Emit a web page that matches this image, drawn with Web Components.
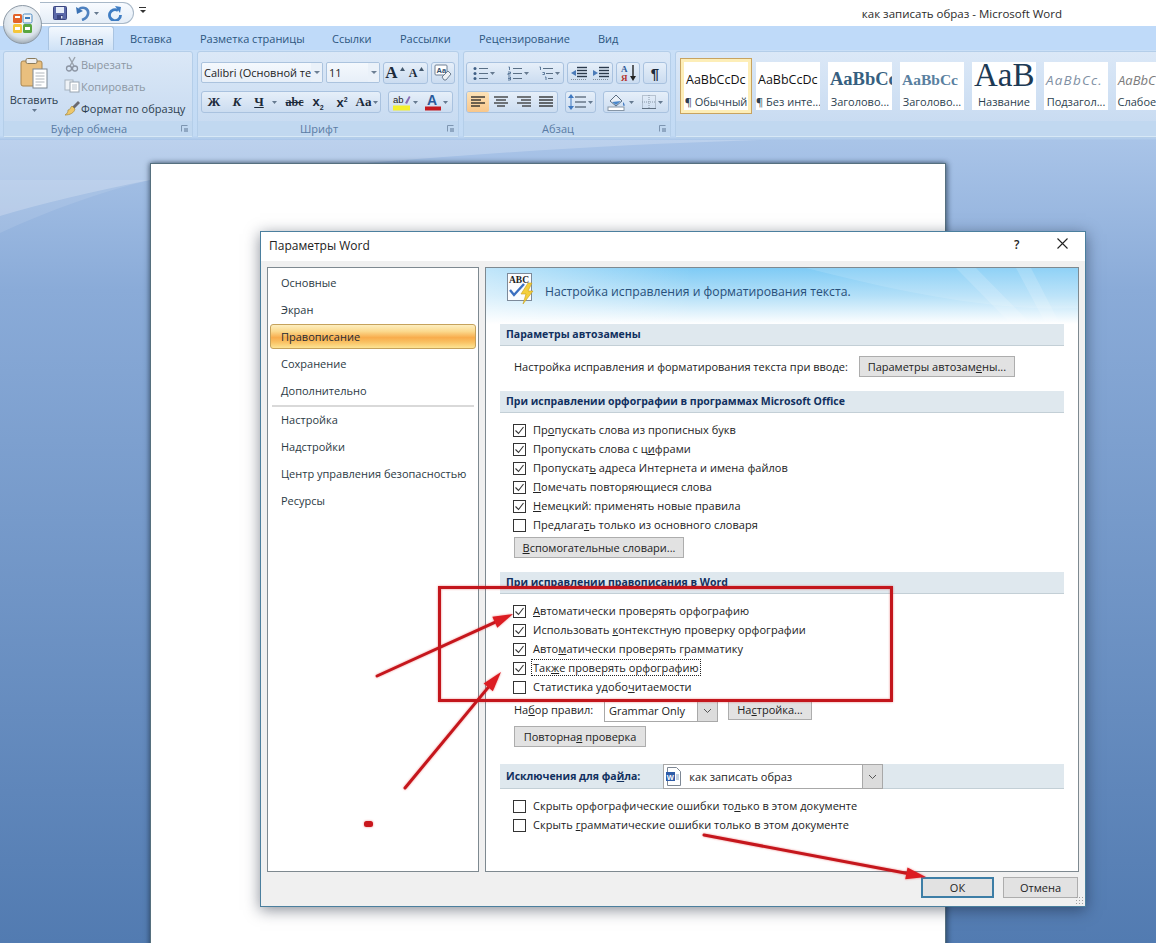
<!DOCTYPE html>
<html lang="ru"><head><meta charset="utf-8"><title>Параметры Word</title>
<style>
html,body{margin:0;padding:0;background:#fff}
body{font-family:"Open Sans","Noto Sans",sans-serif;font-size:11px;color:#222}
u{text-underline-offset:1px}
</style></head><body>
<wd-app>
  <wd-titlebar>как записать образ - Microsoft Word</wd-titlebar>
  <wd-tabs>
    <wd-tab active style="width:66px;margin-right:4px">Главная</wd-tab>
    <wd-tab style="width:70px">Вставка</wd-tab>
    <wd-tab style="width:132px">Разметка страницы</wd-tab>
    <wd-tab style="width:68px">Ссылки</wd-tab>
    <wd-tab style="width:79px">Рассылки</wd-tab>
    <wd-tab style="width:119px">Рецензирование</wd-tab>
    <wd-tab style="width:50px">Вид</wd-tab>
  </wd-tabs>
  <wd-ribbon>
    <wd-group style="width:190px" launcher>
      <wd-clipboard>
        <wd-paste slot="paste"><wd-icon name="paste"></wd-icon><span>Вставить</span><wd-icon name="caret"></wd-icon></wd-paste>
        <wd-cliprow dim><wd-icon name="cut"></wd-icon>Вырезать</wd-cliprow>
        <wd-cliprow dim><wd-icon name="copy"></wd-icon>Копировать</wd-cliprow>
        <wd-cliprow><wd-icon name="brush"></wd-icon>Формат по образцу</wd-cliprow>
      </wd-clipboard>
      <span slot="label">Буфер обмена</span>
    </wd-group>
    <wd-group style="width:262px" launcher>
      <wd-rows>
        <wd-row>
          <wd-ribcombo style="width:122px">Calibri (Основной те</wd-ribcombo>
          <wd-ribcombo style="width:54px">11</wd-ribcombo>
          <wd-set><wd-tool style="width:22px"><b style="font:bold 17px 'Liberation Serif',serif">A</b><wd-icon name="sup" style="margin-bottom:8px"></wd-icon></wd-tool><wd-tool style="width:21px"><b style="font:bold 12px 'Liberation Serif',serif">A</b><wd-icon name="sup" style="margin-bottom:8px"></wd-icon></wd-tool></wd-set>
          <wd-set><wd-tool style="width:22px"><wd-icon name="clear"></wd-icon></wd-tool></wd-set>
        </wd-row>
        <wd-row>
          <wd-set style="width:180px">
            <wd-tool style="width:24px"><b style="font:bold 13px 'Liberation Serif',serif">Ж</b></wd-tool>
            <wd-tool style="width:22px"><b style="font:italic bold 13px 'Liberation Serif',serif">К</b></wd-tool>
            <wd-tool style="width:35px"><b style="font:bold 13px 'Liberation Serif',serif;text-decoration:underline;margin-right:6px">Ч</b><wd-icon name="caret"></wd-icon></wd-tool>
            <wd-tool style="width:23px"><span style="font:bold 12px 'Liberation Serif',serif;text-decoration:line-through">abc</span></wd-tool>
            <wd-tool style="width:24px"><b style="font:bold 13px 'Liberation Sans',sans-serif">x<sub style="font-size:7px">2</sub></b></wd-tool>
            <wd-tool style="width:24px"><b style="font:bold 13px 'Liberation Sans',sans-serif">x<sup style="font-size:7px;line-height:0">2</sup></b></wd-tool>
            <wd-tool style="width:26px"><span style="font:bold 13px 'Liberation Serif',serif">Aa</span><wd-icon name="caret"></wd-icon></wd-tool>
          </wd-set>
          <wd-set style="width:65px;margin-left:4px">
            <wd-tool style="width:32px"><wd-icon name="marker"></wd-icon><wd-icon name="caret"></wd-icon></wd-tool>
            <wd-tool style="width:33px"><wd-icon name="fontcolor"></wd-icon><wd-icon name="caret"></wd-icon></wd-tool>
          </wd-set>
        </wd-row>
      </wd-rows>
      <span slot="label">Шрифт</span>
    </wd-group>
    <wd-group style="width:208px" launcher>
      <wd-rows style="padding-left:2px">
        <wd-row>
          <wd-set>
            <wd-tool style="width:34px"><wd-icon name="bullets"></wd-icon><wd-icon name="caret"></wd-icon></wd-tool>
            <wd-tool style="width:33px"><wd-icon name="numbers"></wd-icon><wd-icon name="caret"></wd-icon></wd-tool>
            <wd-tool style="width:29px"><wd-icon name="multi"></wd-icon><wd-icon name="caret"></wd-icon></wd-tool>
          </wd-set>
          <wd-set>
            <wd-tool style="width:22px"><wd-icon name="outdent"></wd-icon></wd-tool>
            <wd-tool style="width:22px"><wd-icon name="indent"></wd-icon></wd-tool>
          </wd-set>
          <wd-set><wd-tool style="width:22px"><wd-icon name="sort"></wd-icon></wd-tool></wd-set>
          <wd-set><wd-tool style="width:22px"><span style="font:bold 15px 'Liberation Sans',sans-serif">¶</span></wd-tool></wd-set>
        </wd-row>
        <wd-row>
          <wd-set>
            <wd-tool on style="width:22px"><wd-icon name="al"></wd-icon></wd-tool>
            <wd-tool style="width:23px"><wd-icon name="ac"></wd-icon></wd-tool>
            <wd-tool style="width:23px"><wd-icon name="ar"></wd-icon></wd-tool>
            <wd-tool style="width:22px"><wd-icon name="aj"></wd-icon></wd-tool>
          </wd-set>
          <wd-set style="margin-left:4px"><wd-tool style="width:29px"><wd-icon name="spacing"></wd-icon><wd-icon name="caret"></wd-icon></wd-tool></wd-set>
          <wd-set style="margin-left:4px">
            <wd-tool style="width:32px"><wd-icon name="shade"></wd-icon><wd-icon name="caret"></wd-icon></wd-tool>
            <wd-tool style="width:32px"><wd-icon name="borders"></wd-icon><wd-icon name="caret"></wd-icon></wd-tool>
          </wd-set>
        </wd-row>
      </wd-rows>
      <span slot="label">Абзац</span>
    </wd-group>
    <wd-group style="flex:0 0 500px">
      <wd-gallery>
        <wd-style selected><span slot="s" style="font:12.5px 'Open Sans',sans-serif;color:#111">AaBbCcDc</span>¶ Обычный</wd-style>
        <wd-style><span slot="s" style="font:12.5px 'Open Sans',sans-serif;color:#111">AaBbCcDc</span>¶ Без инте...</wd-style>
        <wd-style><span slot="s" style="font:bold 18.5px 'Liberation Serif',serif;color:#365f80">AaBbCc</span>Заголово...</wd-style>
        <wd-style><span slot="s" style="font:bold 15.5px 'Liberation Serif',serif;color:#5a7f9f">AaBbCc</span>Заголово...</wd-style>
        <wd-style big><span slot="s" style="font:33px 'Liberation Serif',serif;color:#1d3a55;display:block;margin-top:-5px">AaB</span>Название</wd-style>
        <wd-style><span slot="s" style="font:italic 13.5px 'Open Sans',sans-serif;letter-spacing:1.2px;color:#7f90a4">AaBbCc.</span>Подзагол...</wd-style>
        <wd-style last><span slot="s" style="font:italic 13px 'Open Sans',sans-serif;color:#7c7c7c">AaBbC</span>Слабое</wd-style>
      </wd-gallery>
    </wd-group>
  </wd-ribbon>
  <wd-workspace><wd-page></wd-page></wd-workspace>

  <wd-qat><wd-icon name="save"></wd-icon><wd-icon name="undo" style="margin-left:3px"></wd-icon><wd-icon name="caret" style="margin-left:-2px"></wd-icon><wd-icon name="redo" style="margin-left:3px"></wd-icon></wd-qat>
  <wd-orb></wd-orb>

  <wd-dialog>
    <span slot="title">Параметры Word</span>
    <wd-nav slot="nav">
      <wd-navitem>Основные</wd-navitem>
      <wd-navitem>Экран</wd-navitem>
      <wd-navitem selected>Правописание</wd-navitem>
      <wd-navitem>Сохранение</wd-navitem>
      <wd-navitem>Дополнительно</wd-navitem>
      <wd-navsep></wd-navsep>
      <wd-navitem>Настройка</wd-navitem>
      <wd-navitem>Надстройки</wd-navitem>
      <wd-navitem>Центр управления безопасностью</wd-navitem>
      <wd-navitem>Ресурсы</wd-navitem>
    </wd-nav>
    <wd-panel slot="panel">
      <wd-icon slot="icon" name="abc"></wd-icon>
      <span slot="head">Настройка исправления и форматирования текста.</span>

      <wd-sec>Параметры автозамены</wd-sec>
      <wd-line style="margin-top:10px"><span style="margin-right:11px">Настройка исправления и форматирования текста при вводе:</span><wd-btn style="width:156px">Параметры автозам<u>е</u>ны...</wd-btn></wd-line>

      <wd-sec style="margin-top:14px">При исправлении орфографии в программах Microsoft Office</wd-sec>
      <wd-checks style="margin-top:8px">
        <wd-check checked>Пр<u>о</u>пускать слова из прописных букв</wd-check>
        <wd-check checked>Пропускать слова с ц<u>и</u>фрами</wd-check>
        <wd-check checked>Пропускат<u>ь</u> адреса Интернета и имена файлов</wd-check>
        <wd-check checked><u>П</u>омечать повторяющиеся слова</wd-check>
        <wd-check checked><u>Н</u>емецкий: применять новые правила</wd-check>
        <wd-check>Предлага<u>т</u>ь только из основного словаря</wd-check>
      </wd-checks>
      <wd-line style="margin-top:2px"><wd-btn style="width:170px"><u>В</u>спомогательные словари...</wd-btn></wd-line>

      <wd-sec style="margin-top:14px">При исправлении правописания в Word</wd-sec>
      <wd-checks style="margin-top:8px">
        <wd-check checked><u>А</u>втоматически проверять орфографию</wd-check>
        <wd-check checked>Использовать <u>к</u>онтекстную проверку орфографии</wd-check>
        <wd-check checked>Авто<u>м</u>атически проверять грамматику</wd-check>
        <wd-check checked focus>Так<u>ж</u>е проверять орфографию</wd-check>
        <wd-check>Статистика удобо<u>ч</u>итаемости</wd-check>
      </wd-checks>
      <wd-line style="margin-top:2px;align-items:flex-start"><span style="width:90px;line-height:21px">На<u>б</u>ор правил:</span><wd-combo style="width:114px;height:23px"><span style="padding-left:3px;padding-bottom:1px">Grammar Only</span></wd-combo><wd-btn style="width:84px;margin-left:10px">На<u>с</u>тройка...</wd-btn></wd-line>
      <wd-line style="margin-top:4px"><wd-btn style="width:132px">Повторна<u>я</u> проверка</wd-btn></wd-line>

      <wd-sec tall style="margin-top:17px">Исключения для фа<u>й</u>ла:<wd-combo slot="extra" style="width:220px;height:25px"><wd-icon name="doc"></wd-icon><span style="padding-left:7px">как записать образ</span></wd-combo></wd-sec>
      <wd-checks style="margin-top:8px">
        <wd-check>Скрыть орфографические ошибки то<u>л</u>ько в этом документе</wd-check>
        <wd-check>Скрыть <u>г</u>рамматические ошибки только в этом документе</wd-check>
      </wd-checks>
    </wd-panel>
    <wd-btn slot="foot" primary style="width:73px">ОК</wd-btn>
    <wd-btn slot="foot" style="width:75px">Отмена</wd-btn>
  </wd-dialog>
  <wd-annot></wd-annot>
</wd-app>

<script>
function def(name,html){customElements.define(name,class extends HTMLElement{constructor(){super();this.attachShadow({mode:'open'}).innerHTML=html;}});}
def('wd-app',`<style>:host{display:flex;flex-direction:column;position:relative;width:1156px;height:943px;overflow:hidden;background:#fff}</style><slot></slot>`);
def('wd-titlebar',`<style>:host{display:flex;flex:0 0 26px;height:26px;justify-content:flex-end;align-items:center;padding:0 94px 0 0;font-size:11.5px;color:#2b2b2b;box-sizing:border-box;background:#fff}</style><slot></slot>`);
def('wd-tabs',`<style>:host{display:flex;flex:0 0 24px;height:24px;padding-left:48px;background:#bfdaf9;box-sizing:border-box}</style><slot></slot>`);
def('wd-tab',`<style>:host{display:block;box-sizing:border-box;padding:2px 0 0 12px;height:24px;line-height:22px;font-size:11px;color:#2c5680;white-space:nowrap}
:host([active]){color:#2a3f55;padding-top:3px;background:linear-gradient(#f3f8fe,#cfe2f6);border:1px solid #a9c4e2;border-bottom:0;border-radius:3px 3px 0 0;padding-left:11px}</style><slot></slot>`);
def('wd-ribbon',`<style>:host{display:flex;flex:0 0 90px;height:90px;box-sizing:border-box;gap:4px;padding:1px 0 0 3px;background:linear-gradient(#c9dff7 0,#c2daf4 86px,#a9c5e8 90px);overflow:hidden}</style><slot></slot>`);
def('wd-group',`<style>:host{display:flex;flex-direction:column;flex:none;box-sizing:border-box;height:87px;border:1px solid #b4cee9;border-radius:3px;background:linear-gradient(#dbe8f7,#c5d9f0);box-shadow:inset 0 -1px 0 #e3f0fb}
.c{flex:1;min-height:0;display:flex}.l{flex:0 0 16px;height:16px;display:flex;align-items:center;justify-content:center;background:#c1d8f0;font-size:11px;color:#5a7ca4;position:relative;border-bottom:1px solid #d7e8f6;box-sizing:border-box}
:host([launcher]) .l{padding-right:18px}
.k{display:none;position:absolute;right:4px;top:4px;width:7px;height:7px}
:host([launcher]) .k{display:block}</style><div class="c"><slot></slot></div><div class="l"><slot name="label"></slot><svg class="k" viewBox="0 0 7 7"><path d="M.5 6.5v-6h6" fill="none" stroke="#7d95b0"/><rect x="3" y="3" width="4" height="4" fill="#8fa7c2"/></svg></div>`);
def('wd-clipboard',`<style>:host{display:flex;flex:1}.p{flex:0 0 60px;display:flex}.r{display:flex;flex-direction:column;padding-top:1px}</style><div class="p"><slot name="paste"></slot></div><div class="r"><slot></slot></div>`);
def('wd-paste',`<style>:host{display:flex;flex-direction:column;align-items:center;width:60px;padding-top:5px;font-size:11px;color:#2c3e50;line-height:15px}::slotted(span){margin-top:3px;margin-bottom:2px}</style><slot></slot>`);
def('wd-cliprow',`<style>:host{display:flex;align-items:center;height:22px;gap:1px;font-size:11px;color:#2d3f50;white-space:nowrap;width:124px;margin-left:0}:host([dim]){color:#8c97a3}</style><slot></slot>`);
def('wd-rows',`<style>:host{display:flex;flex-direction:column;gap:7px;padding:10px 0 0 3px}</style><slot></slot>`);
def('wd-row',`<style>:host{display:flex;gap:3px;height:22px}</style><slot></slot>`);
def('wd-ribcombo',`<style>:host{display:flex;align-items:center;box-sizing:border-box;height:21px;border:1px solid #abc3de;border-radius:2px;background:linear-gradient(#f4f8fd,#e7eff8);font-size:11px;color:#222;padding-left:2px;position:relative;white-space:nowrap;overflow:hidden}
.a{position:absolute;right:0;top:0;bottom:0;width:11px;background:#eaf1f9;display:flex;align-items:center;justify-content:center}.a i{border:3px solid transparent;border-top:3px solid #6c7f93;margin-top:3px}</style><slot></slot><span class="a"><i></i></span>`);
def('wd-set',`<style>:host{display:flex;box-sizing:border-box;height:22px;border:1px solid #a9c2df;border-radius:3px;background:linear-gradient(#e6eff9,#cbdcf0)}</style><slot></slot>`);
def('wd-tool',`<style>:host{display:flex;align-items:center;justify-content:center;gap:2px;height:20px;box-sizing:border-box;color:#1c2a3a;white-space:nowrap;line-height:1}:host([on]){background:linear-gradient(#fde3b8,#f8c68a);border-radius:2px}</style><slot></slot>`);
def('wd-gallery',`<style>:host{display:flex;gap:8px;padding:10px 0 0 8px}</style><slot></slot>`);
def('wd-style',`<style>:host{display:flex;flex-direction:column;flex:none;box-sizing:border-box;width:64px;height:48px;background:#fff;font-size:11px;color:#2d3f50;align-items:center;white-space:nowrap}
:host([selected]){box-shadow:0 0 0 3px #fdeeb8,0 0 0 4px #c8a360}
:host([last]){width:40px}
.s{height:30px;width:100%;overflow:hidden;display:flex;align-items:center;padding:5px 0 0 2px;box-sizing:border-box;line-height:26px}
:host([big]) .s{padding:0 0 0 2px;align-items:flex-start;line-height:normal}
.t{height:18px;line-height:19px;width:100%;text-align:center;overflow:hidden}:host([last]) .t{text-align:left;padding-left:3px}</style><div class="s"><slot name="s"></slot></div><div class="t"><slot></slot></div>`);
def('wd-workspace',`<style>:host{display:block;flex:1;position:relative;overflow:hidden;background:linear-gradient(#a9c4e8 0,#8aabd8 150px,#527bb1 100%)}
svg{position:absolute;left:0;top:0}.p{position:relative;margin:23px 0 0 150px;width:796px}</style><svg width="1156" height="300"><path d="M0 0H760C500 8 300 30 150 40 90 52 40 64 0 76Z" fill="#fff" opacity=".22"/><path d="M0 93C50 70 100 52 150 40L0 40Z" fill="#fff" opacity=".1"/></svg><div class="p"><slot></slot></div>`);
def('wd-page',`<style>:host{display:block;box-sizing:border-box;width:796px;height:800px;background:#fff;border:1px solid #56707f;box-shadow:-1px 0 5px rgba(30,50,70,.55),2px 0 5px rgba(30,50,70,.45)}</style>`);
def('wd-qat',`<style>:host{position:absolute;left:40px;top:2px;width:94px;height:22px;box-sizing:border-box;border:1px solid #a8b8c8;border-left:0;border-radius:0 12px 12px 0;background:linear-gradient(#f8fbff,#e4edf7);display:flex;align-items:center;gap:5px;padding-left:13px}
.m{position:absolute;left:99px;top:4px;width:7px;color:#333;font-size:0}.m:before{content:"";display:block;height:1px;background:#333;margin-bottom:2px}.m:after{content:"";display:block;border:3px solid transparent;border-top:3px solid #333;width:0;margin-left:.5px}</style><slot></slot><span class="m"></span>`);
def('wd-orb',`<style>:host{position:absolute;left:3px;top:5px;width:39px;height:39px}</style><svg width="39" height="39" viewBox="0 0 39 39"><defs><radialGradient id="o" cx=".5" cy=".35" r=".7"><stop offset="0" stop-color="#fff"/><stop offset=".7" stop-color="#d9e2ea"/><stop offset="1" stop-color="#8f9ba6"/></radialGradient></defs><circle cx="19.5" cy="19.5" r="19" fill="url(#o)" stroke="#8d99a5"/><rect x="10" y="9" width="9" height="9" rx="1.5" fill="#e3632a"/><rect x="20" y="9" width="9" height="9" rx="1.5" fill="#f3f3f3" stroke="#4a8ac4"/><rect x="10" y="19" width="9" height="9" rx="1.5" fill="#f5c63a"/><rect x="20" y="19" width="9" height="9" rx="1.5" fill="#59a63f"/><rect x="12" y="11" width="5" height="2" fill="#fff"/><rect x="22" y="12" width="5" height="2" fill="#3a7ab8"/><rect x="12" y="22" width="5" height="3" fill="#fff"/><rect x="22" y="22" width="5" height="3" fill="#fff"/></svg>`);
def('wd-dialog',`<style>:host{position:absolute;left:260px;top:231px;width:826px;height:676px;box-sizing:border-box;border:1px solid #4b7f9e;background:#f0f0f0;display:flex;flex-direction:column;box-shadow:0 3px 14px rgba(20,30,50,.5);font-size:11px;color:#222}
.t{flex:0 0 29px;background:#fff;display:flex;align-items:center;padding:0 0 3px 8px;box-sizing:border-box;font-size:12px;position:relative;color:#222}
.q{position:absolute;left:753px;top:4px;font-size:12px;font-weight:600}.x{position:absolute;left:795px;top:5px}
.b{display:flex;gap:6px;padding:6px 6px 0 6px;box-sizing:border-box;height:611px;flex:0 0 611px}
.f{display:flex;justify-content:flex-end;gap:9px;padding:5px 7px 0 0;position:relative;flex:1}
.g{position:absolute;right:1px;bottom:1px;width:9px;height:9px;background:radial-gradient(#a0a0a0 35%,transparent 40%) 0 0/3px 3px}</style>
<div class="t"><slot name="title"></slot><span class="q">?</span><svg class="x" width="13" height="13" viewBox="0 0 13 13"><path d="M1.5 1.5l10 10M11.5 1.5l-10 10" stroke="#222" stroke-width="1.1"/></svg></div>
<div class="b"><slot name="nav"></slot><slot name="panel"></slot></div><div class="f"><slot name="foot"></slot><span class="g"></span></div>`);
def('wd-nav',`<style>:host{display:block;box-sizing:border-box;flex:0 0 212px;width:212px;height:605px;background:#fff;border:1px solid #7e8990;padding:2px}</style><slot></slot>`);
def('wd-navitem',`<style>:host{display:flex;align-items:center;height:27px;padding:0 0 2px 11px;color:#2b3a44;font-size:11px;box-sizing:border-box;white-space:nowrap}
:host([selected]){height:25px;margin:0 0 2px;border:1px solid #c5a25c;border-radius:3px;padding:0 0 1px 10px;background:linear-gradient(#fdeec0 0,#fbd98d 28%,#f8ac4c 55%,#f9c264 75%,#fde494 100%);color:#1f2a33}</style><slot></slot>`);
def('wd-navsep',`<style>:host{display:block;height:2px;margin:0 2px;background:#d9d9d9}</style>`);
def('wd-panel',`<style>:host{display:block;box-sizing:border-box;flex:0 0 594px;width:594px;height:605px;background:#fff;border:1px solid #7e8990;position:relative;overflow:hidden}
.h{height:56px;display:flex;align-items:flex-start;padding:5px 0 0 21px;gap:10px;font-size:12.2px;color:#29507a;background:linear-gradient(90deg,rgba(255,255,255,.5),rgba(255,255,255,0) 35%),linear-gradient(#7fcbf5 0,#b4e0f8 50%,#fff 100%);box-sizing:border-box;position:relative}
.h svg{position:absolute;left:0;top:0}.tx{padding-top:10px;position:relative}.ic{position:relative}
.m{padding:0 14px}</style>
<div class="h"><svg width="592" height="56"><path d="M320 0C400 20 500 44 592 40V0Z" fill="#fff" opacity=".13"/><path d="M470 0l55 56h20L490 0ZM530 0l30 56h14L545 0Z" fill="#fff" opacity=".16"/></svg><span class="ic"><slot name="icon"></slot></span><span class="tx"><slot name="head"></slot></span></div><div class="m"><slot></slot></div>`);
def('wd-sec',`<style>:host{display:flex;align-items:center;height:22px;box-sizing:border-box;background:#dfe8ee;border-bottom:1px solid #c3cfd6;padding:0 0 1px 6px;font-weight:700;font-size:10.5px;color:#11305f;white-space:nowrap}
:host([tall]){height:25px;padding-bottom:0}.e{margin-left:23px;display:flex;align-self:flex-start}</style><span><slot></slot></span><span class="e"><slot name="extra"></slot></span>`);
def('wd-line',`<style>:host{display:flex;align-items:center;padding-left:14px;font-size:11px;color:#222;white-space:nowrap}</style><slot></slot>`);
def('wd-checks',`<style>:host{display:block;padding-left:13px}</style><slot></slot>`);
customElements.define('wd-check',class extends HTMLElement{constructor(){super();this.attachShadow({mode:'open'}).innerHTML=`<style>:host{display:flex;align-items:center;height:19px;font-size:11px;color:#222;white-space:nowrap;letter-spacing:.05px}
.b{width:13px;height:13px;box-sizing:border-box;border:1px solid #333;background:#fff;margin-right:6px;flex:none;display:flex}.b svg{display:none}:host([checked]) .b svg{display:block}
.t{padding:0 1px;margin-top:-2px;outline:1px dotted transparent}:host([focus]) .t{outline-color:#222;outline-offset:0}</style><span class="b"><svg width="11" height="11" viewBox="0 0 11 11"><path d="M1.5 5.5l3 3 5-6.5" fill="none" stroke="#333" stroke-width="1.1"/></svg></span><span class="t"><slot></slot></span>`;}});
def('wd-btn',`<style>:host{display:flex;align-items:center;justify-content:center;box-sizing:border-box;height:21px;background:#e2e2e2;border:1px solid #adadad;font-size:11px;color:#222;white-space:nowrap;padding-bottom:1px}
:host([primary]){border:2px solid #3d7ea6}</style><span><slot></slot></span>`);
def('wd-combo',`<style>:host{display:flex;align-items:center;box-sizing:border-box;border:1px solid #a8a8a8;background:#fff;position:relative;font-weight:400;font-size:11px;color:#222;white-space:nowrap;padding-left:1px}
.a{position:absolute;right:0;top:0;bottom:0;width:19px;background:#dcdcdc;border-left:1px solid #a8a8a8;display:flex;align-items:center;justify-content:center}</style><slot></slot><span class="a"><svg width="9" height="6" viewBox="0 0 9 6"><path d="M1 1l3.5 3.5L8 1" fill="none" stroke="#555"/></svg></span>`);

const lines=(arr,c='#444',w=1)=>arr.map(a=>`<path d="M${a[0]} ${a[1]}H${a[2]}" stroke="${c}" stroke-width="${w}"/>`).join('');
const S=(w,h,b)=>`<svg width="${w}" height="${h}" viewBox="0 0 ${w} ${h}" style="display:block">${b}</svg>`;
const ICON={
caret:S(5,3,'<path d="M0 0h5L2.5 3z" fill="#667a90"/>'),
sup:S(5,4,'<path d="M0 4h5L2.5 0z" fill="#44596e"/>'),
save:S(14,14,'<rect x=".5" y=".5" width="13" height="13" rx="1" fill="#5a68a8" stroke="#3b4680"/><rect x="3" y="1" width="8" height="6" fill="#e6edf8"/><rect x="4" y="9" width="6" height="4" fill="#3b4680"/><rect x="8" y="10" width="1.5" height="2.5" fill="#dfe6f2"/>'),
undo:S(16,15,'<path d="M4 3c5-3 10 0 9 5-.5 3-3 5-6 6" fill="none" stroke="#4f82c0" stroke-width="2.6"/><path d="M1 1l1 7 6-3z" fill="#3b72b4"/>'),
redo:S(16,15,'<path d="M11 2.5A5.5 5.5 0 1 0 13.5 7" fill="none" stroke="#3f7dc3" stroke-width="2.8" transform="translate(0 2)"/><path d="M8 0l6 1-1 6z" fill="#3f7dc3"/>'),
paste:S(28,32,'<rect x="1" y="4" width="21" height="25" rx="2" fill="#e9bf7e" stroke="#a98650"/><rect x="6" y="1.5" width="11" height="5" rx="1.5" fill="#eee" stroke="#8a7a5a"/><rect x="13" y="12" width="14" height="19" fill="#fff" stroke="#7d8893"/><path d="M15.5 16h9M15.5 19h9M15.5 22h9M15.5 25h9M15.5 28h6" stroke="#b0b6bc"/>'),
cut:S(16,16,'<path d="M5 1l5 9M11 1L6 10" stroke="#9aa3ae" stroke-width="1.4"/><circle cx="5" cy="12.5" r="2.5" fill="none" stroke="#8c95a3" stroke-width="1.3"/><circle cx="11" cy="12.5" r="2.5" fill="none" stroke="#8c95a3" stroke-width="1.3"/>'),
copy:S(16,14,'<rect x="1" y="1" width="8" height="10" fill="#eef2f6" stroke="#a8b4c0"/><rect x="6" y="3" width="9" height="10" fill="#fff" stroke="#9aa6b2"/><path d="M8 6h5M8 8h5M8 10h5" stroke="#b8c2cc"/>'),
brush:S(16,16,'<path d="M8 7l6-6 2 2-6 6z" fill="#6a6a70"/><path d="M8 6l3 3c-1 4-5 6-10 6 2-1 3-3 3-5 2 0 2-2 4-4z" fill="#eec76a" stroke="#a38a40" stroke-width=".7"/>'),
clear:S(18,18,'<rect x="1" y="1" width="12" height="10" rx="1" fill="#fff" stroke="#6e7f92"/><text x="2.5" y="9" font-family="Liberation Sans" font-size="7.5" font-weight="700" fill="#33506e">Aa</text><path d="M8 13l6-6 3 3-5 6H10z" fill="#eef2f6" stroke="#6e7f92"/>'),
marker:S(19,18,`<rect x="1" y="12.5" width="17" height="5" fill="#f4f02c"/><text x="1" y="10" font-family="Liberation Sans" font-size="9.5" fill="#222">ab</text><path d="M13 10l4-7 1.5 1-3.5 7z" fill="#8a6fb4"/>`),
fontcolor:S(16,18,`<text x="2" y="12" font-family="Liberation Sans" font-size="14" font-weight="700" fill="#2a5a9a">A</text><rect x="0" y="13.5" width="16" height="4" fill="#c51a1f"/>`),
bullets:S(15,15,lines([[6,2.5,15],[6,7.5,15],[6,12.5,15]],'#5a6f85')+'<circle cx="2" cy="2.5" r="1.5" fill="#3f5f85"/><circle cx="2" cy="7.5" r="1.5" fill="#3f5f85"/><circle cx="2" cy="12.5" r="1.5" fill="#3f5f85"/>'),
numbers:S(15,15,lines([[6,2.5,15],[6,7.5,15],[6,12.5,15]],'#5a6f85')+'<path d="M1.5 1h1v3M1 6h2.5v1.5H1V9h2.5M1 11h2.5v3H1M1 12.5h2" fill="none" stroke="#3f5f85" stroke-width=".8"/>'),
multi:S(15,15,lines([[5,2.5,15],[8,7.5,15],[10,12.5,15]],'#5a6f85')+'<path d="M1.5 1h1v3M4.5 6.5h2v2h-2M7 11h1v3" fill="none" stroke="#3f5f85" stroke-width=".8"/>'),
outdent:S(16,14,lines([[6,1.5,16],[6,4.5,16],[6,7.5,16],[6,10.5,16]],'#2b3a4c',1.4)+'<path d="M5 4L0 7l5 3z" fill="#4a7ab8"/><path d="M0 13.5h16" stroke="#7f8d9c" stroke-dasharray="1 1"/>'),
indent:S(16,14,lines([[6,1.5,16],[6,4.5,16],[6,7.5,16],[6,10.5,16]],'#2b3a4c',1.4)+'<path d="M0 4l5 3-5 3z" fill="#4a7ab8"/><path d="M0 13.5h16" stroke="#7f8d9c" stroke-dasharray="1 1"/>'),
sort:S(17,18,`<text x="1" y="8" font-family="Liberation Serif" font-size="9" font-weight="700" fill="#2d5a98">А</text><text x="1" y="17" font-family="Liberation Serif" font-size="9" font-weight="700" fill="#b5342f">Я</text><path d="M13 1v14" stroke="#222" stroke-width="1.4"/><path d="M10 12h6l-3 5z" fill="#222"/>`),
al:S(14,12,lines([[0,1,14],[0,4,10],[0,7,14],[0,10,9]],'#222',1.3)),
ac:S(14,12,lines([[0,1,14],[2,4,12],[0,7,14],[3,10,11]],'#333',1.3)),
ar:S(14,12,lines([[0,1,14],[4,4,14],[0,7,14],[5,10,14]],'#333',1.3)),
aj:S(14,12,lines([[0,1,14],[0,4,14],[0,7,14],[0,10,14]],'#222',1.3)),
spacing:S(18,18,lines([[7,4,18],[7,9,18],[7,14,18]],'#4a5a6c',1.2)+'<path d="M3 1l3 4H0zM3 17l3-4H0z" fill="#3f78c0"/><path d="M3 4v10" stroke="#3f78c0"/>'),
shade:S(20,17,'<rect x="1" y="13" width="16" height="3.5" fill="#fff" stroke="#8796a6"/><path d="M3 7l6-6 6 6-6 5z" fill="#eaf0f7" stroke="#5b6d82"/><path d="M5 8l4 3 5-4z" fill="#4a86c8"/><path d="M16 8c2 2 2 4 1 4s-1-2-1-4z" fill="#3f78c0"/>'),
borders:S(14,14,'<rect x=".5" y=".5" width="13" height="13" fill="none" stroke="#8a99a8" stroke-dasharray="1 1"/><path d="M7 0v14M0 7h14" stroke="#8a99a8" stroke-dasharray="1 1"/><path d="M0 13.5h14" stroke="#5f6f80"/>'),
abc:`<svg width="28" height="33" viewBox="0 0 28 33" style="display:block"><rect x=".5" y=".5" width="24" height="27" fill="#fbfcfe" stroke="#7d8a9a"/><text x="2" y="10" font-family="Liberation Serif" font-size="9.5" font-weight="700" fill="#222">ABC</text><path d="M3 17l4 5 10-11" fill="none" stroke="#3b6fc0" stroke-width="2.4"/><path d="M21 10l-7 11h5l-3 10 10-13h-5l4-8z" fill="#f4cf3c" stroke="#c99f1f" stroke-width=".6"/></svg>`,
doc:S(17,19,'<path d="M2.5.5h9l4 4v14h-13z" fill="#fff" stroke="#7d8794"/><rect x="1" y="5" width="9" height="9" fill="#2f5ca8"/><text x="1.7" y="12.5" font-family="Liberation Sans" font-size="7.5" font-weight="700" fill="#fff">W</text><path d="M11 8h3M11 10h3M11 12h3" stroke="#8ba4c4"/>')
};
customElements.define('wd-icon',class extends HTMLElement{constructor(){super();this.attachShadow({mode:'open'});}connectedCallback(){this.shadowRoot.innerHTML=`<style>:host{display:block;flex:none}</style>`+(ICON[this.getAttribute('name')]||'');}});

function arrow(x1,y1,x2,y2,len=20,hw=6,w=3){const d=Math.hypot(x2-x1,y2-y1),ux=(x2-x1)/d,uy=(y2-y1)/d,bx=x2-ux*len,by=y2-uy*len,px=-uy,py=ux;
return `<line x1="${x1}" y1="${y1}" x2="${bx}" y2="${by}" stroke="#c5161c" stroke-width="${w}" stroke-linecap="round"/><polygon fill="#dc1c22" points="${x2},${y2} ${bx+px*hw},${by+py*hw} ${bx-px*hw},${by-py*hw}"/>`;}
customElements.define('wd-annot',class extends HTMLElement{constructor(){super();this.attachShadow({mode:'open'}).innerHTML=`<style>:host{position:absolute;left:0;top:0;width:1156px;height:943px;pointer-events:none}svg{display:block;filter:drop-shadow(0 0 1px rgba(225,50,50,.55))}</style><svg width="1156" height="943"><rect x="439.5" y="587.5" width="452" height="113" fill="none" stroke="#c3161c" stroke-width="3"/>${arrow(377,676,513,614)}${arrow(405,788,501,672)}${arrow(704,835,926,877)}<rect x="364" y="821" width="9" height="6" rx="2.5" fill="#c9161c"/></svg>`;}});
</script>
</body></html>
